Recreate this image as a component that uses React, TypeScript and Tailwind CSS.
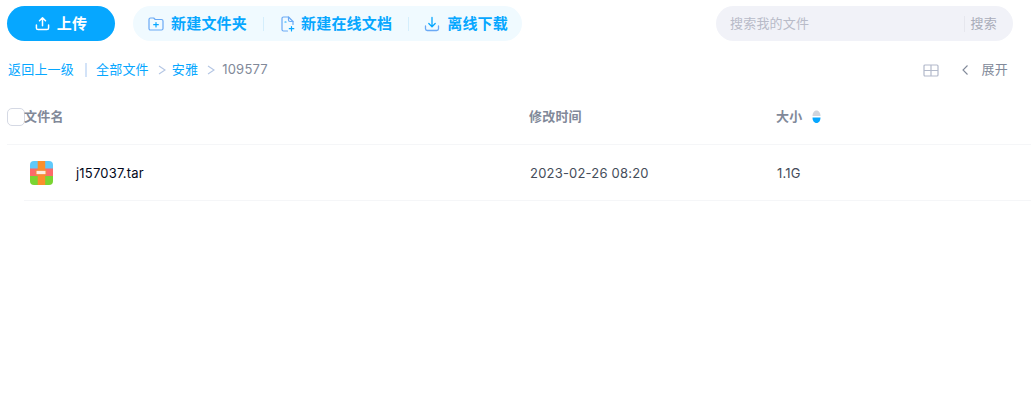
import type { ReactNode } from 'react';

function ToolButton({ icon, label, gap }: { icon: ReactNode; label: string; gap: string }) {
  return (
    <div className={`flex items-center ${gap} text-[15px] font-bold text-[#06a7ff]`}>
      {icon}
      <span className="pt-[1px]">{label}</span>
    </div>
  );
}

function Divider() {
  return <div className="h-[14px] w-px bg-[#d4eefc]" />;
}

function ArchiveIcon() {
  return (
    <svg width="23" height="24" viewBox="0 0 23 24">
      <defs>
        <clipPath id="r">
          <rect width="23" height="24" rx="4" />
        </clipPath>
      </defs>
      <g clipPath="url(#r)">
        <rect width="23" height="8" fill="#5fc9fb" />
        <rect y="7.500" width="23" height="8" fill="#fc6a6a" />
        <rect y="15" width="23" height="9" fill="#7ad431" />
        <rect x="7.700" width="7.500" height="24" fill="#fb8f2c" />
        <rect x="6" y="9.300" width="10" height="4.400" fill="#fdeee0" stroke="#f28a3c" strokeWidth="1" />
      </g>
    </svg>
  );
}

export default function App() {
  return (
    <div className="h-[400px] w-[1031px] overflow-hidden bg-white font-['Inter','Noto_Sans_CJK_SC',sans-serif] tracking-[0.2px]">
      <div className="flex items-center pl-[7px] pr-[18px] pt-[6px]">
        <button className="flex h-[35px] w-[108px] items-center justify-center gap-[7px] rounded-full bg-[#06a7ff] text-[15px] font-bold text-white">
          <svg width="15" height="15" viewBox="0 0 16 16" fill="none" stroke="white" strokeWidth="1.6" strokeLinecap="round" strokeLinejoin="round">
            <path d="M8 10.500V2M4.800 5 8 1.800 11.200 5M1.500 9.500v3.200c0 1 .7 1.800 1.800 1.800h9.400c1.100 0 1.800-.8 1.800-1.800V9.500" />
          </svg>
          <span className="pt-[1px]">上传</span>
        </button>

        <div className="ml-[18px] flex h-[35px] w-[389px] items-center gap-[16px] rounded-full bg-[#f0faff] pl-[15px]">
          <ToolButton
            label="新建文件夹"
            gap="gap-[7px]"
            icon={
              <svg width="16" height="16" viewBox="0 0 16 16" fill="none" stroke="#6aa9f5" strokeWidth="1.2" strokeLinecap="round" strokeLinejoin="round">
                <path d="M1 3.500C1 2.600 1.600 2 2.500 2h3.200l1.500 1.500h6.300c.9 0 1.500.6 1.500 1.500v7.500c0 .9-.6 1.500-1.500 1.500h-11C1.600 14 1 13.400 1 12.500z" />
                <path stroke="#06a7ff" d="M8 6.500v4.500M5.700 8.700h4.600" />
              </svg>
            }
          />
          <Divider />
          <ToolButton
            label="新建在线文档"
            gap="gap-[5px]"
            icon={
              <svg width="16" height="16" viewBox="0 0 16 16" fill="none" stroke="#6aa9f5" strokeWidth="1.2" strokeLinecap="round" strokeLinejoin="round">
                <path d="M7.500 15H3.500C2.600 15 2 14.400 2 13.500v-11C2 1.600 2.600 1 3.500 1h5L13 5.500v3" />
                <path d="M8.500 1v3c0 .9.600 1.500 1.500 1.500h3" />
                <path stroke="#06a7ff" d="M11.500 10.500v4.500M9.300 12.700h4.500M5 6h1" />
              </svg>
            }
          />
          <Divider />
          <ToolButton
            label="离线下载"
            gap="gap-[7px]"
            icon={
              <svg className="-ml-px" width="16" height="16" viewBox="0 0 16 16" fill="none" stroke="#6aa9f5" strokeWidth="1.3" strokeLinecap="round" strokeLinejoin="round">
                <path d="M8 1.500V10.500M4.800 7.500 8 10.700l3.200-3.200" stroke="#06a7ff" />
                <path d="M1.500 10v2.700c0 1 .7 1.800 1.800 1.800h9.400c1.100 0 1.800-.8 1.800-1.800V10" />
              </svg>
            }
          />
        </div>

        <div className="ml-auto flex h-[35px] w-[297px] items-center rounded-full bg-[#f1f2f8] pl-[14px] pr-[16px] text-[13px]">
          <span className="flex-1 text-[#b8bbc8]">搜索我的文件</span>
          <div className="mr-[6px] h-[16px] w-px bg-[#e6e7ee]" />
          <span className="text-[#a9adba]">搜索</span>
        </div>
      </div>

      <div className="mt-[20px] flex h-[18px] items-center pl-[8px] pr-[23px] text-[13px] text-[#06a7ff]">
        <span>返回上一级</span>
        <span className="ml-[11px] mr-[9px] h-[14px] w-[2px] bg-[#d3e3f8]" />
        <span>全部文件</span>
        <svg className="ml-[9px] mr-[6px]" width="8" height="10" viewBox="0 0 8 10" fill="none" stroke="#b4c6e4" strokeWidth="1.100">
          <path d="M1 1l6 4-6 4" />
        </svg>
        <span>安雅</span>
        <svg className="ml-[9px] mr-[7px]" width="8" height="10" viewBox="0 0 8 10" fill="none" stroke="#b4c6e4" strokeWidth="1.100">
          <path d="M1 1l6 4-6 4" />
        </svg>
        <span className="text-[#818999]">109577</span>
        <div className="ml-auto flex items-center text-[#818999]">
          <svg width="16" height="13" viewBox="0 0 16 13" fill="none" stroke="#b3bacb" strokeWidth="1.200">
            <rect x="1" y="1" width="14" height="11" rx="1" />
            <path d="M1 6.500h14M8 1v11" />
          </svg>
          <svg className="ml-[22px]" width="8" height="12" viewBox="0 0 8 12" fill="none" stroke="#818999" strokeWidth="1.100">
            <path d="M6.500 1.500 2 6l4.500 4.500" />
          </svg>
          <span className="ml-[13px]">展开</span>
        </div>
      </div>

      <div className="mt-[14px] pl-[7px]">
        <div className="flex h-[52px] items-center border-b border-[#f5f6f8] pb-[3px] text-[13px] font-bold text-[#818999]">
          <div className="h-[18px] w-[18px] rounded-[5px] border border-[#d5d9e4] bg-white" />
          <span className="w-[505px] shrink-0 -ml-px">文件名</span>
          <span className="w-[247px] shrink-0">修改时间</span>
          <span>大小</span>
          <svg className="ml-[10px]" width="9" height="14" viewBox="0 0 9 14">
            <path d="M4.500 0.500C7 0.500 8.500 3 8.500 6H0.500C0.500 3 2 0.500 4.500 0.500Z" fill="#d0d4dc" />
            <path d="M0.500 7.500H8.500C8.500 10.500 7 13 4.500 13S0.500 10.500 0.500 7.500Z" fill="#06a7ff" />
          </svg>
        </div>
        <div className="ml-[17px] flex h-[56px] items-center border-b border-[#f5f6f8] text-[13px] text-[#454d5a]">
          <div className="ml-[6px] w-[46px] shrink-0">
            <ArchiveIcon />
          </div>
          <span className="w-[454px] shrink-0 pt-[2px] text-[#03081a]">j157037.tar</span>
          <span className="w-[247px] shrink-0 pt-[2px]">2023-02-26 08:20</span>
          <span className="pt-[2px]">1.1G</span>
        </div>
      </div>
    </div>
  );
}
